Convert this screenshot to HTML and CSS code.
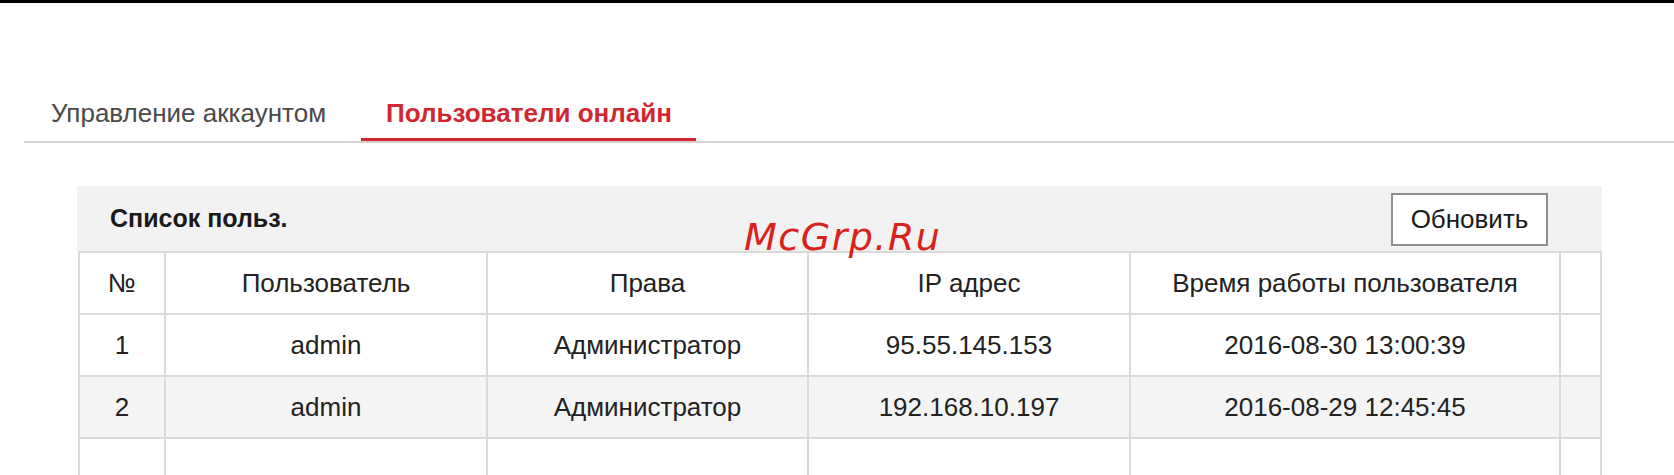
FILE: index.html
```html
<!DOCTYPE html>
<html lang="ru">
<head>
<meta charset="utf-8">
<title>Пользователи онлайн</title>
<link rel="stylesheet" href="styles.css">
</head>
<body>
<div class="topbar"></div>
<nav class="tabs">
  <div class="tab">Управление аккаунтом</div>
  <div class="tab active">Пользователи онлайн</div>
</nav>
<section class="panel">
  <div class="panel-head">
    <span class="panel-title">Список польз.</span>
    <button class="btn">Обновить</button>
  </div>
  <table class="grid">
    <colgroup>
      <col class="c1"><col class="c2"><col class="c3"><col class="c4"><col class="c5"><col class="c6">
    </colgroup>
    <tr class="head">
      <td>№</td><td>Пользователь</td><td>Права</td><td>IP адрес</td><td>Время работы пользователя</td><td></td>
    </tr>
    <tr>
      <td>1</td><td>admin</td><td>Администратор</td><td>95.55.145.153</td><td>2016-08-30 13:00:39</td><td></td>
    </tr>
    <tr class="alt">
      <td>2</td><td>admin</td><td>Администратор</td><td>192.168.10.197</td><td>2016-08-29 12:45:45</td><td></td>
    </tr>
    <tr class="last">
      <td></td><td></td><td></td><td></td><td></td><td></td>
    </tr>
  </table>
</section>
<div class="watermark">McGrp.Ru</div>
</body>
</html>
```
FILE: styles.css
```css
html, body {
  margin: 0;
  padding: 0;
  background: #ffffff;
  overflow: hidden;
}
body {
  font-family: "Liberation Sans", Arial, sans-serif;
  color: #222222;
  position: relative;
  height: 475px;
}
.topbar {
  height: 3px;
  background: #000000;
}
.tabs {
  display: flex;
  margin: 95px 0 0 24px;
  border-bottom: 2px solid #d2d2d2;
}
.tab {
  font-size: 26px;
  line-height: 30px;
  padding: 0 26px 10px 27px;
  border-bottom: 3px solid transparent;
  color: #4a4a4a;
  margin-right: 9px;
}
.tab.active {
  color: #d22630;
  font-weight: bold;
  border-bottom-color: #d22630;
  padding: 0 24px 10px 25px;
}
.panel {
  margin: 43px 0 0 77px;
  width: 1525px;
  height: 289px;
  overflow: hidden;
}
.panel-head {
  height: 65px;
  background: #f2f2f2;
  display: flex;
  align-items: center;
  justify-content: space-between;
  padding: 0 54px 0 33px;
  box-sizing: border-box;
}
.panel-title {
  font-size: 25px;
  font-weight: bold;
  color: #1a1a1a;
}
.btn {
  width: 157px;
  height: 53px;
  box-sizing: border-box;
  background: #ffffff;
  border: 2px solid #8f8f8f;
  font-family: "Liberation Sans", Arial, sans-serif;
  font-size: 26px;
  color: #1a1a1a;
  padding: 0;
  margin-top: 2px;
}
.grid {
  border-collapse: collapse;
  width: 1523px;
  margin-left: 1px;
  table-layout: fixed;
  font-size: 26px;
}
.grid td {
  border: 2px solid #dadada;
  height: 60px;
  padding: 0;
  text-align: center;
  vertical-align: middle;
  color: #222222;
}
.grid tr.alt td {
  background: #f4f4f4;
}
.c1 { width: 86px; }
.c2 { width: 322px; }
.c3 { width: 321px; }
.c4 { width: 322px; }
.c5 { width: 430px; }
.c6 { width: 41px; }
.watermark {
  position: absolute;
  left: 744px;
  top: 218px;
  font-family: "DejaVu Sans", sans-serif;
  font-style: italic;
  font-size: 38px;
  line-height: 38px;
  letter-spacing: 1.5px;
  color: #d9221c;
}
```
